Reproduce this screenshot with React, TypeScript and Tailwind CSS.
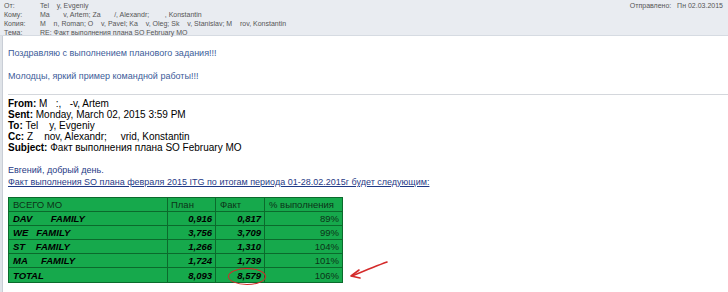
import React from "react";

const rows = [
  { name: "DAV\u00a0\u00a0\u00a0\u00a0\u00a0\u00a0\u00a0FAMILY", plan: "0,916", fact: "0,817", pct: "89%" },
  { name: "WE\u00a0\u00a0\u00a0FAMILY", plan: "3,756", fact: "3,709", pct: "99%" },
  { name: "ST\u00a0\u00a0\u00a0\u00a0FAMILY", plan: "1,266", fact: "1,310", pct: "104%" },
  { name: "MA\u00a0\u00a0\u00a0\u00a0\u00a0FAMILY", plan: "1,724", fact: "1,739", pct: "101%" },
];

export default function App() {
  return (
    <div className="w-[728px] h-[292px] overflow-hidden bg-white relative font-['Liberation_Sans',sans-serif]">
      {/* шапка письма */}
      <div className="h-[36px] bg-[#e9ecf1] border-b border-[#d6dbe2] flex text-[7px] leading-[9px] text-[#555] pt-[1px]">
        <div className="w-[40px] pl-[4px] shrink-0">
          <div>От:</div>
          <div>Кому:</div>
          <div>Копия:</div>
          <div>Тема:</div>
        </div>
        <div className="flex-1">
          <div>Tel&nbsp;&nbsp;&nbsp;&nbsp;y, Evgeniy</div>
          <div>Ma&nbsp;&nbsp;&nbsp;&nbsp;&nbsp;&nbsp;&nbsp;v, Artem; Za&nbsp;&nbsp;&nbsp;&nbsp;&nbsp;&nbsp;&nbsp;/, Alexandr; &nbsp;&nbsp;&nbsp;&nbsp;&nbsp;&nbsp;&nbsp;, Konstantin</div>
          <div>M&nbsp;&nbsp;&nbsp;&nbsp;n, Roman; O&nbsp;&nbsp;&nbsp;&nbsp;v, Pavel; Ka&nbsp;&nbsp;&nbsp;&nbsp;v, Oleg; Sk&nbsp;&nbsp;&nbsp;&nbsp;v, Stanislav; M&nbsp;&nbsp;&nbsp;&nbsp;rov, Konstantin</div>
          <div>RE: Факт выполнения плана SO February MO</div>
        </div>
        <div className="pr-[5px] text-[#555]">Отправлено:&nbsp;&nbsp;&nbsp;Пн 02.03.2015</div>
      </div>

      <div className="flex">
        {/* левая полоска */}
        <div className="w-[3px] h-[256px] bg-[#dfe3e8] border-r border-[#c9ced6] shrink-0" />

        <div className="flex-1 pl-[5px] pt-[12px]">
          <div className="text-[9px] leading-[11px] text-[#3c5c99]">
            <div>Поздравляю с выполнением планового задания!!!</div>
            <div className="mt-[12px]">Молодцы, яркий пример командной работы!!!</div>
          </div>

          <div className="mt-[12px] border-t border-[#d4d7dc] pt-[3px] text-[10px] leading-[11px] text-black">
            <div><b>From:</b> M&nbsp;&nbsp;&nbsp;:,&nbsp;&nbsp;&nbsp;-v, Artem</div>
            <div><b>Sent:</b> Monday, March 02, 2015 3:59 PM</div>
            <div><b>To:</b> Tel&nbsp;&nbsp;&nbsp;&nbsp;y, Evgeniy</div>
            <div><b>Cc:</b> Z&nbsp;&nbsp;&nbsp;&nbsp;nov, Alexandr; &nbsp;&nbsp;&nbsp;&nbsp;vrid, Konstantin</div>
            <div><b>Subject:</b> Факт выполнения плана SO February MO</div>
          </div>

          <div className="mt-[11px] text-[9px] leading-[12px] text-[#1f3a86]">
            <div>Евгений, добрый день.</div>
            <div className="underline">Факт выполнения SO плана февраля 2015 ITG по итогам периода 01-28.02.2015г будет следующим:</div>
          </div>

          <table className="mt-[9px] border-collapse bg-[#16a94c] text-[9.5px] leading-[13px] border border-[#0b6a2c]">
            <thead>
              <tr className="h-[13px] text-[#0c3318]">
                <td className="w-[159px] border border-[#0b6a2c] pl-[4px]">ВСЕГО МО</td>
                <td className="w-[48px] border border-[#0b6a2c] pl-[3px]">План</td>
                <td className="w-[49px] border border-[#0b6a2c] pl-[4px]">Факт</td>
                <td className="w-[78px] border border-[#0b6a2c] pl-[4px]">% выполнения</td>
              </tr>
            </thead>
            <tbody>
              {rows.map((r) => (
                <tr key={r.plan} className="h-[14px]">
                  <td className="border border-[#0b6a2c] pl-[4px] font-bold italic text-black">{r.name}</td>
                  <td className="border border-[#0b6a2c] pr-[3px] text-right font-bold italic text-black">{r.plan}</td>
                  <td className="border border-[#0b6a2c] pr-[3px] text-right font-bold italic text-black">{r.fact}</td>
                  <td className="border border-[#0b6a2c] pr-[3px] text-right text-[#0c3318]">{r.pct}</td>
                </tr>
              ))}
              <tr className="h-[15px]">
                <td className="border border-[#0b6a2c] pl-[4px] font-bold italic text-black">TOTAL</td>
                <td className="border border-[#0b6a2c] pr-[3px] text-right font-bold italic text-black">8,093</td>
                <td className="border border-[#0b6a2c] pr-[3px] text-right font-bold italic text-black relative">
                  8,579
                  <span className="absolute left-[12px] top-[0px] w-[38px] h-[17px] rounded-[50%] border border-[#d42a2a]" />
                </td>
                <td className="border border-[#0b6a2c] pr-[3px] text-right text-[#0c3318]">106%</td>
              </tr>
            </tbody>
          </table>
        </div>
      </div>

      {/* стрелка */}
      <svg className="absolute left-[346px] top-[258px]" width="46" height="24" viewBox="0 0 46 24">
        <path d="M41 4 C30 8 18 13 6 18" stroke="#d42a2a" strokeWidth="1.6" fill="none" strokeLinecap="round" />
        <path d="M13 12 L5 18 L14 20" stroke="#d42a2a" strokeWidth="1.6" fill="none" strokeLinecap="round" strokeLinejoin="round" />
      </svg>
    </div>
  );
}
